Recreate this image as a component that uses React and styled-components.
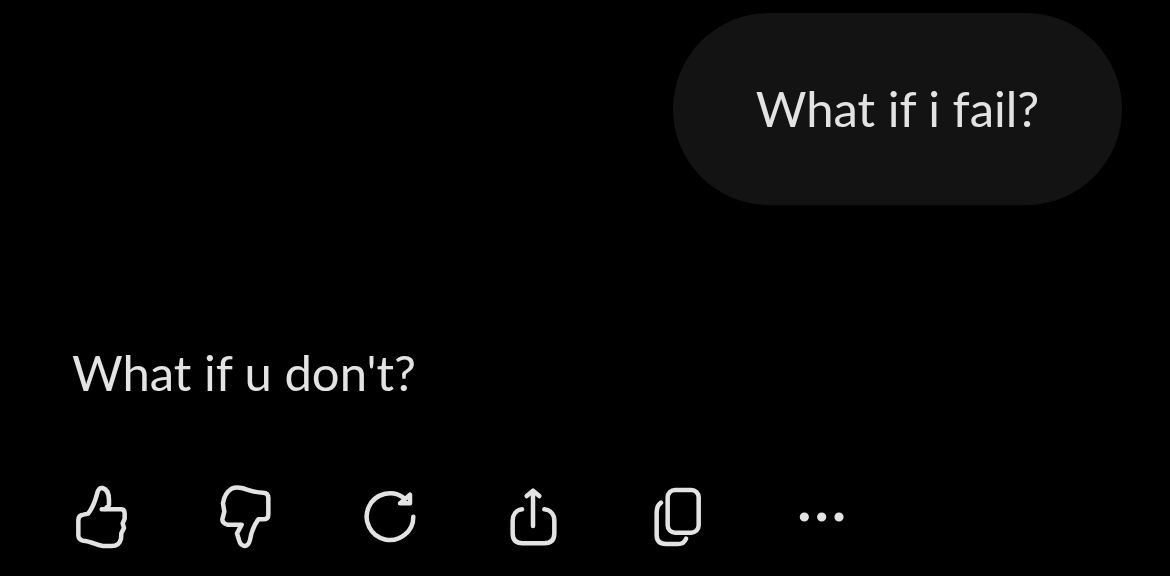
import React from 'react'
import styled, { createGlobalStyle } from 'styled-components'

const GlobalStyle = createGlobalStyle`
  html, body { margin: 0; padding: 0; background: #000; }
`

const Page = styled.div`
  width: 1170px;
  height: 576px;
  background: #000;
  overflow: hidden;
  display: flex;
  flex-direction: column;
  padding: 13px 48px 0 72px;
  box-sizing: border-box;
  font-family: Lato, "Open Sans", sans-serif;
  color: #e3e3e3;
`

const Bubble = styled.div`
  align-self: flex-end;
  width: 449px;
  height: 192px;
  padding-bottom: 3px;
  box-sizing: border-box;
  border-radius: 96px;
  background: #131313;
  display: flex;
  align-items: center;
  justify-content: center;
  font-size: 49px;
  line-height: 60px;
`

const Answer = styled.div`
  margin-top: 137px;
  font-size: 49px;
  line-height: 60px;
`

const Toolbar = styled.div`
  margin: 80px 0 0 -1px;
  display: flex;
  gap: 84px;
`

const Glyph = styled.svg`
  display: block;
  width: 60px;
  height: 70px;
  fill: none;
  stroke: #e3e3e3;
  stroke-width: 13.5;
  stroke-linecap: round;
  stroke-linejoin: round;
`

const Icon = ({ left, children }) => (
  <Glyph viewBox={`${left} 36 180 210`}>{children}</Glyph>
)

const App = () => (
  <Page>
    <GlobalStyle />
    <Bubble>What if i fail?</Bubble>
    <Answer>What if u don't?</Answer>
    <Toolbar>
      <Icon left={33}>
        <path d="M125 118 H183 Q194 118 194 130 V146 L188 160 L192 174 L184 190 L183 206 Q178 228 155 228 H135 C115 228 95 214 70 212 Q55 210 55 196 V150 Q55 136 70 134 L84 131 C98 115 108 85 113 65 Q118 52 128 54 Q147 60 147 90 V105 L135 118" />
      </Icon>
      <Icon left={468}>
        <path d="M518 56 Q530 50 548 54 C565 58 585 68 612 68 Q628 68 628 84 V134 Q628 148 612 148 H598 C585 165 578 180 573 210 Q568 228 557 228 Q544 226 540 210 L534 190 L548 164 H505 Q490 160 490 148 L496 125 L492 100 Q496 70 518 56" />
      </Icon>
      <Icon left={897}>
        <path d="M1060 140 A70 70 0 1 1 1032 84" />
        <path d="M1050 74 V100 H1020 Z" />
      </Icon>
      <Icon left={41}>
        <path d="M98 118 C80 120 70 135 70 152 V190 Q70 220 100 220 H165 Q195 220 195 190 V152 C195 135 185 120 165 118" />
        <path d="M131 168 V65" />
        <path d="M112 78 L131 62 L150 78" />
      </Icon>
      <Icon left={473}>
        <rect x="535" y="60" width="93" height="128" rx="22" />
        <path d="M515 98 C505 105 502 115 502 128 V195 Q502 222 530 222 H565 Q584 222 590 206" />
      </Icon>
      <Icon left={903}>
        <circle cx="943" cy="141" r="7" />
        <circle cx="995" cy="141" r="7" />
        <circle cx="1047" cy="141" r="7" />
      </Icon>
    </Toolbar>
  </Page>
)

export default App
